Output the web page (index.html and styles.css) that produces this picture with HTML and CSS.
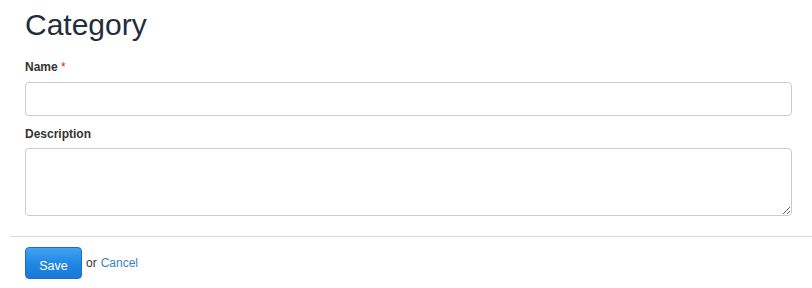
FILE: index.html
```html
<!DOCTYPE html>
<html>
<head>
<meta charset="utf-8">
<link rel="stylesheet" href="styles.css">
</head>
<body>
<div class="page">
  <div class="form-body">
    <h2 class="title">Category</h2>
    <div class="field field-name">
      <label class="label">Name <span class="req">*</span></label>
      <input class="input" type="text">
    </div>
    <div class="field field-desc">
      <label class="label">Description</label>
      <textarea class="textarea"></textarea>
    </div>
  </div>
  <div class="actions">
    <button class="btn-save">Save</button>
    <span class="or">or</span>
    <a class="cancel" href="#">Cancel</a>
  </div>
</div>
</body>
</html>
```
FILE: styles.css
```css
html, body {
  margin: 0;
  padding: 0;
  background: #fff;
}
body {
  font-family: "Liberation Sans", Arial, sans-serif;
  font-size: 12px;
  color: #333;
}
.page {
  padding-left: 10px;
}
.form-body {
  padding: 0 20px 0 15px;
  border-bottom: 1px solid #dcdcdc;
  padding-bottom: 20px;
}
.title {
  margin: 0;
  padding-top: 8px;
  font-size: 30px;
  font-weight: normal;
  line-height: 33px;
  color: #232d3b;
}
.field-name {
  margin-top: 17px;
}
.field-desc {
  margin-top: 9px;
}
.label {
  display: block;
  font-weight: bold;
  font-size: 12px;
  line-height: 18px;
  color: #333;
}
.field-name .label {
  margin-bottom: 6px;
}
.field-desc .label {
  margin-bottom: 5px;
}
.req {
  color: #e02020;
  font-weight: normal;
}
.input, .textarea {
  display: block;
  box-sizing: border-box;
  width: 100%;
  margin: 0;
  border: 1px solid #cccccc;
  border-radius: 4px;
  background: #fff;
  font-family: inherit;
  font-size: 12px;
  padding: 6px 8px;
}
.input {
  height: 34px;
}
.textarea {
  height: 68px;
  resize: vertical;
}
.actions {
  display: flex;
  align-items: center;
  padding: 10px 0 0 15px;
}
.btn-save {
  box-sizing: border-box;
  width: 57px;
  height: 32px;
  border: 1px solid #1b6fc7;
  border-radius: 4px;
  background: linear-gradient(to bottom, #42a2f2 0%, #1f86e4 55%, #1a78d6 100%);
  color: #fff;
  font-family: inherit;
  font-size: 12.5px;
  padding: 5px 0 0 0;
}
.or {
  margin-left: 4px;
  color: #333;
}
.cancel {
  margin-left: 4px;
  color: #3a7fc4;
  text-decoration: none;
}
```
